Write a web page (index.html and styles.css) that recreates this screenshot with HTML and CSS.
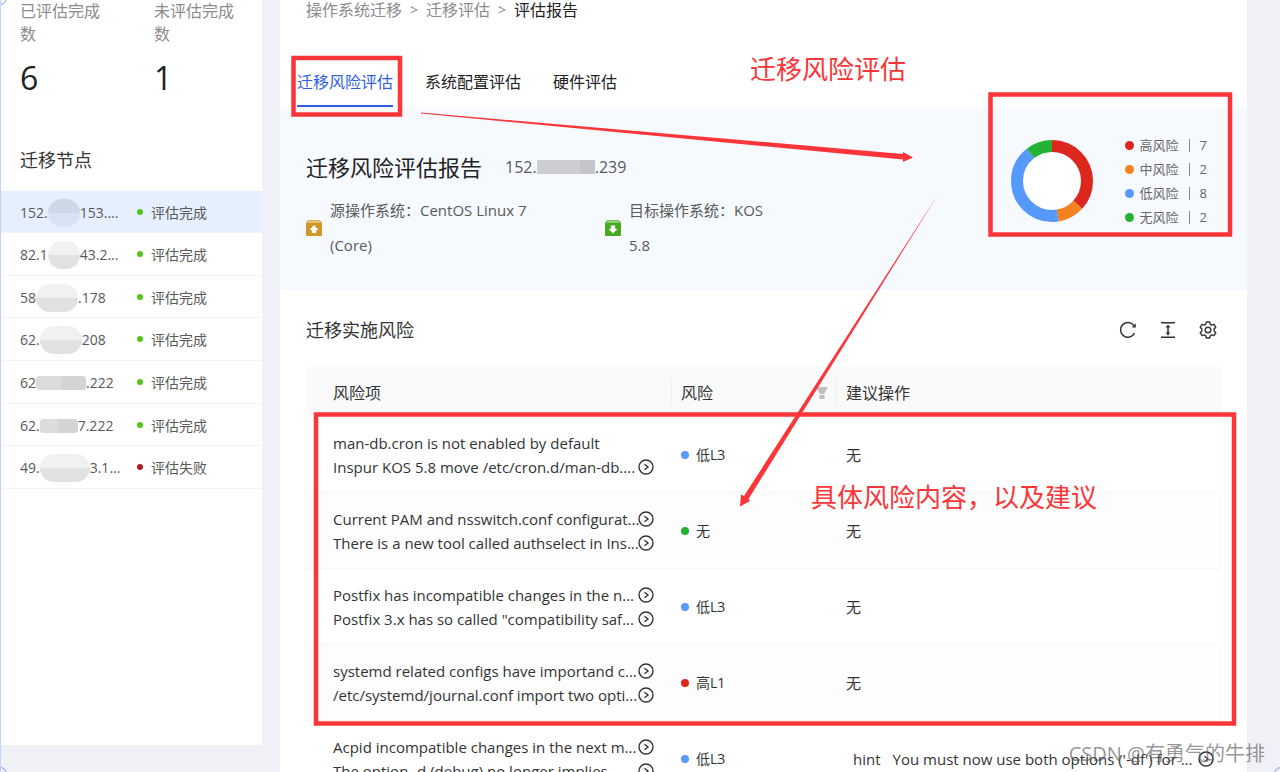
FILE: index.html
```
<!DOCTYPE html>
<html lang="zh-CN">
<head>
    <meta charset="UTF-8">
    <meta name="viewport" content="width=device-width, initial-scale=1.0">
    <title>评估报告 - 操作系统迁移</title>
    <link rel="stylesheet" href="styles.css">
</head>
<body>
    <svg class="sprite" aria-hidden="true">
        <symbol id="icon-more" viewBox="0 0 16 16">
            <circle cx="8" cy="8" r="7" fill="none" stroke="currentColor" stroke-width="1.4"/>
            <path d="M6.5 5.2 L10 8 L6.5 10.8" fill="none" stroke="currentColor" stroke-width="1.4"/>
        </symbol>
    </svg>

    <div class="app">
        <aside class="sidebar">
            <div class="stats">
                <div class="stat">
                    <div class="stat-label">已评估完成数</div>
                    <div class="stat-number">6</div>
                </div>
                <div class="stat">
                    <div class="stat-label">未评估完成数</div>
                    <div class="stat-number">1</div>
                </div>
            </div>
            <h2 class="sidebar-title">迁移节点</h2>
            <table class="nodes">
                <tr class="selected">
                    <td><div class="ip">152.<span class="mosaic blue round"></span>153....</div></td>
                    <td><span class="dot done"></span>评估完成</td>
                </tr>
                <tr>
                    <td><div class="ip">82.1<span class="mosaic round"></span>43.2...</div></td>
                    <td><span class="dot done"></span>评估完成</td>
                </tr>
                <tr>
                    <td><div class="ip">58<span class="mosaic round wide"></span>.178</div></td>
                    <td><span class="dot done"></span>评估完成</td>
                </tr>
                <tr>
                    <td><div class="ip">62.<span class="mosaic round wide"></span>208</div></td>
                    <td><span class="dot done"></span>评估完成</td>
                </tr>
                <tr>
                    <td><div class="ip">62<span class="mosaic flat"></span>.222</div></td>
                    <td><span class="dot done"></span>评估完成</td>
                </tr>
                <tr>
                    <td><div class="ip">62.<span class="mosaic flat short"></span>7.222</div></td>
                    <td><span class="dot done"></span>评估完成</td>
                </tr>
                <tr>
                    <td><div class="ip">49.<span class="mosaic round wider"></span>3.1...</div></td>
                    <td><span class="dot failed"></span>评估失败</td>
                </tr>
            </table>
        </aside>

        <main class="main">
            <nav class="breadcrumb">
                <a href="#">操作系统迁移</a>
                <span class="sep">&gt;</span>
                <a href="#">迁移评估</a>
                <span class="sep">&gt;</span>
                <span class="current">评估报告</span>
            </nav>
            <div class="tabs">
                <button class="tab active">迁移风险评估</button>
                <button class="tab">系统配置评估</button>
                <button class="tab">硬件评估</button>
            </div>

            <section class="report">
                <div class="report-info">
                    <div class="report-heading">
                        <h1>迁移风险评估报告</h1>
                        <div class="ip report-ip">152.<span class="mosaic dark"></span>.239</div>
                    </div>
                    <div class="systems">
                        <div class="system">
                            <svg class="system-icon" viewBox="0 0 16 16">
                                <rect y="3" width="16" height="13" rx="1" fill="#d09628"/>
                                <path d="M2 0.8 H14 L15.5 3 H0.5 Z" fill="#f1dfb4" stroke="#d09628"/>
                                <path d="M8 5 L12.5 10 H10.2 V13 H5.8 V10 H3.5 Z" fill="#fff"/>
                            </svg>
                            <p>源操作系统：CentOS Linux 7 (Core)</p>
                        </div>
                        <div class="system">
                            <svg class="system-icon" viewBox="0 0 16 16">
                                <rect y="3" width="16" height="13" rx="1" fill="#49aa22"/>
                                <path d="M2 0.8 H14 L15.5 3 H0.5 Z" fill="#c4e8b4" stroke="#49aa22"/>
                                <path d="M8 13.2 L12.5 9 H10.2 V5.5 H5.8 V9 H3.5 Z" fill="#fff"/>
                            </svg>
                            <p class="target">目标操作系统：KOS 5.8</p>
                        </div>
                    </div>
                </div>
                <div class="chart">
                    <svg class="donut" viewBox="0 0 82 82">
                        <circle cx="41" cy="41" r="29" fill="#fff"/>
                        <g fill="none" stroke-width="12" transform="rotate(-90 41 41)">
                            <circle cx="41" cy="41" r="35" pathLength="19" stroke="#dc261e" stroke-dasharray="7 12"/>
                            <circle cx="41" cy="41" r="35" pathLength="19" stroke="#f58220" stroke-dasharray="2 17" stroke-dashoffset="-7"/>
                            <circle cx="41" cy="41" r="35" pathLength="19" stroke="#5599fc" stroke-dasharray="8 11" stroke-dashoffset="-9"/>
                            <circle cx="41" cy="41" r="35" pathLength="19" stroke="#22b335" stroke-dasharray="2 17" stroke-dashoffset="-17"/>
                        </g>
                    </svg>
                    <ul class="legend">
                        <li><span class="dot high"></span>高风险<i></i>7</li>
                        <li><span class="dot medium"></span>中风险<i></i>2</li>
                        <li><span class="dot low"></span>低风险<i></i>8</li>
                        <li><span class="dot none"></span>无风险<i></i>2</li>
                    </ul>
                </div>
            </section>

            <section class="risks">
                <div class="risks-header">
                    <h2>迁移实施风险</h2>
                    <div class="tools">
                        <button aria-label="刷新">
                            <svg viewBox="0 0 18 18" fill="none" stroke="currentColor" stroke-width="1.5">
                                <path d="M15.6 12.2 A7.4 7.4 0 1 1 15 4.6"/>
                                <path d="M16.8 2.2 V6.4 H12.8 Z" fill="currentColor" stroke="none"/>
                            </svg>
                        </button>
                        <button aria-label="密度">
                            <svg viewBox="0 0 18 18" fill="none" stroke="currentColor" stroke-width="1.5">
                                <path d="M2 1.8 H16 M2 16.2 H16 M9 5 V13"/>
                                <path d="M9 3.6 L11.4 6.6 H6.6 Z M9 14.4 L11.4 11.4 H6.6 Z" fill="currentColor" stroke="none"/>
                            </svg>
                        </button>
                        <button aria-label="设置">
                            <svg viewBox="0 0 18 18" fill="none" stroke="currentColor" stroke-width="1.4" stroke-linejoin="round">
                                <path d="M7.3 1 H10.7 L11.3 3.3 L12.6 4.1 L15 3.4 L16.8 6.3 L15.1 8 V10 L16.8 11.7 L15 14.6 L12.6 13.9 L11.3 14.7 L10.7 17 H7.3 L6.7 14.7 L5.4 13.9 L3 14.6 L1.2 11.7 L2.9 10 V8 L1.2 6.3 L3 3.4 L5.4 4.1 L6.7 3.3 Z"/>
                                <circle cx="9" cy="9" r="2.8"/>
                            </svg>
                        </button>
                    </div>
                </div>
                <table class="risk-table">
                    <colgroup>
                        <col class="col-item">
                        <col class="col-level">
                        <col>
                    </colgroup>
                    <thead>
                        <tr>
                            <th>风险项</th>
                            <th>
                                <div class="th-filter">
                                    风险
                                    <svg class="filter" viewBox="0 0 12 12"><path d="M0 0 H12 L8.5 6 V7 H3.5 V6 Z M3.5 8 H8.5 V12 H3.5 Z" fill="#bfbfbf"/></svg>
                                </div>
                            </th>
                            <th>建议操作</th>
                        </tr>
                    </thead>
                    <tbody>
                        <tr>
                            <td>
                                <div class="line"><span>man-db.cron is not enabled by default</span></div>
                                <div class="line"><span>Inspur KOS 5.8 move /etc/cron.d/man-db....</span><button class="more" aria-label="详情"><svg><use href="#icon-more"/></svg></button></div>
                            </td>
                            <td class="level"><span class="dot low"></span>低L3</td>
                            <td>无</td>
                        </tr>
                        <tr>
                            <td>
                                <div class="line"><span>Current PAM and nsswitch.conf configurat...</span><button class="more" aria-label="详情"><svg><use href="#icon-more"/></svg></button></div>
                                <div class="line"><span>There is a new tool called authselect in Ins...</span><button class="more" aria-label="详情"><svg><use href="#icon-more"/></svg></button></div>
                            </td>
                            <td class="level"><span class="dot none"></span>无</td>
                            <td>无</td>
                        </tr>
                        <tr>
                            <td>
                                <div class="line"><span>Postfix has incompatible changes in the n...</span><button class="more" aria-label="详情"><svg><use href="#icon-more"/></svg></button></div>
                                <div class="line"><span>Postfix 3.x has so called "compatibility saf...</span><button class="more" aria-label="详情"><svg><use href="#icon-more"/></svg></button></div>
                            </td>
                            <td class="level"><span class="dot low"></span>低L3</td>
                            <td>无</td>
                        </tr>
                        <tr>
                            <td>
                                <div class="line"><span>systemd related configs have importand c...</span><button class="more" aria-label="详情"><svg><use href="#icon-more"/></svg></button></div>
                                <div class="line"><span>/etc/systemd/journal.conf import two opti...</span><button class="more" aria-label="详情"><svg><use href="#icon-more"/></svg></button></div>
                            </td>
                            <td class="level"><span class="dot high"></span>高L1</td>
                            <td>无</td>
                        </tr>
                        <tr>
                            <td>
                                <div class="line"><span>Acpid incompatible changes in the next m...</span><button class="more" aria-label="详情"><svg><use href="#icon-more"/></svg></button></div>
                                <div class="line"><span>The option -d (debug) no longer implies -...</span><button class="more" aria-label="详情"><svg><use href="#icon-more"/></svg></button></div>
                            </td>
                            <td class="level"><span class="dot low"></span>低L3</td>
                            <td>
                                <div class="hint"><b>hint</b><span>You must now use both options ('-df') for ...</span><button class="more" aria-label="详情"><svg><use href="#icon-more"/></svg></button></div>
                            </td>
                        </tr>
                    </tbody>
                </table>
            </section>
        </main>

        <!-- 标注层 -->
        <svg class="marks" width="1280" height="772" viewBox="0 0 1280 772">
            <g fill="none" stroke="#fb3538" stroke-width="4.5">
                <rect x="293.5" y="58" width="106.5" height="56.5"/>
                <rect x="990.5" y="94.5" width="239.5" height="140"/>
                <rect x="316" y="414.5" width="918" height="309"/>
            </g>
            <g fill="#fb3538">
                <path d="M421 112.5 L903 154 L903 152 L913 157.5 L903 162 L903 159.5 L421 113.5 Z"/>
                <path d="M939 193 L748.5 499 L750 501 L740 506.5 L741 494.5 L744 496 Z"/>
            </g>
            <g fill="none" stroke="#7b97ee">
                <circle cx="0" cy="-2" r="6.5"/>
                <circle cx="0" cy="774" r="6.5"/>
                <circle cx="1281" cy="774" r="6.5"/>
            </g>
        </svg>
        <div class="note note-top">迁移风险评估</div>
        <div class="note note-detail">具体风险内容，以及建议</div>
        <div class="watermark">CSDN @有勇气的牛排</div>
    </div>
</body>
</html>
```
FILE: styles.css
```
* {
    box-sizing: border-box;
}

body {
    margin: 0;
    font-family: "Open Sans", "Noto Sans CJK SC", sans-serif;
    font-size: 15px;
    line-height: 24px;
    color: #333;
    background: #eff1f6;
}

h1, h2, p, ul {
    margin: 0;
    padding: 0;
    font-weight: 400;
}

button {
    font: inherit;
    color: inherit;
    border: 0;
    padding: 0;
    background: none;
    cursor: pointer;
}

a {
    color: inherit;
    text-decoration: none;
}

.sprite {
    display: none;
}

.app {
    position: relative;
    display: flex;
    align-items: flex-start;
    gap: 18px;
    height: 100vh;
    padding-right: 33px;
    overflow: hidden;
    border-left: 1px solid #c6d2fb;
}

/* 左侧栏 */
.sidebar {
    flex: 0 0 261px;
    padding-bottom: 256px;
    background: #fff;
}

.stats {
    display: grid;
    grid-template-columns: 134px 1fr;
    padding-left: 19px;
}

.stat-label {
    width: 88px;
    font-size: 16px;
    line-height: 23px;
    color: #8c8c8c;
}

.stat-number {
    font-size: 32px;
    line-height: 63px;
    color: #222;
}

.sidebar-title {
    padding: 39px 19px 19px;
    font-size: 18px;
}

.nodes {
    width: 100%;
    height: 298px;
    border-collapse: collapse;
    font-size: 14px;
    line-height: 20px;
    color: #595959;
}

.nodes td {
    padding: 2px 0 0;
    border-bottom: 1px solid #f3f3f5;
}

.nodes td:first-child {
    width: 136px;
    padding-left: 19px;
}

.nodes .selected {
    background: #e6effe;
}

.ip {
    display: flex;
    align-items: center;
    height: 20px;
    white-space: nowrap;
}

.mosaic {
    flex: none;
    width: 32px;
    height: 14px;
    background: linear-gradient(90deg, #dcdcdd 50%, #d4d4d5 50%);
}

.mosaic.round {
    height: 28px;
    border-radius: 14px;
    background: linear-gradient(#f1f1f1 50%, #e0e1e2 50%);
}

.mosaic.blue.round {
    background: linear-gradient(#ced7e6 50%, #d8e2f2 50%);
}

.mosaic.wide {
    width: 42px;
}

.mosaic.wider {
    width: 50px;
}

.mosaic.flat {
    width: 50px;
    border-radius: 3px;
}

.mosaic.flat.short {
    width: 38px;
}

.mosaic.dark {
    width: 58px;
    background: linear-gradient(90deg, #ccced2 75%, #c4c5ca 75%);
}

.dot {
    display: inline-block;
    width: 8px;
    height: 8px;
    margin-right: 7px;
    border-radius: 50%;
    vertical-align: 1px;
}

.nodes .dot {
    width: 6px;
    height: 6px;
    margin-right: 8px;
    vertical-align: 3px;
}

.done { background: #52c41a; }
.failed { background: #a61d24; }
.high { background: #dc261e; }
.medium { background: #f58220; }
.low { background: #5599fc; }
.none { background: #22b335; }

/* 主内容 */
.main {
    flex: 1;
    min-width: 0;
    background: #fff;
}

.breadcrumb {
    display: flex;
    gap: 8px;
    padding-left: 26px;
    font-size: 16px;
    line-height: 20px;
    color: #8c8c8c;
}

.sep {
    font-size: 14px;
}

.current {
    color: #222;
}

.tabs {
    display: flex;
    gap: 32px;
    padding: 39px 17px 0;
}

.tab {
    height: 48px;
    border-bottom: 2px solid transparent;
    font-size: 16px;
    color: #222;
}

.tab.active {
    color: #2f5fe0;
    border-bottom-color: #2f5fe0;
}

.report {
    display: flex;
    justify-content: space-between;
    padding: 33px 40px 27px 26px;
    background: #f6faff;
}

.report-heading {
    display: flex;
    align-items: center;
    gap: 23px;
    height: 54px;
}

h1 {
    font-size: 22px;
    color: #222;
}

.report-ip {
    font-size: 16px;
    color: #595959;
}

.systems {
    display: flex;
    margin-top: -1px;
    color: #595959;
}

.system {
    display: flex;
    align-items: center;
    gap: 8px;
    width: 299px;
    line-height: 35px;
}

.system p {
    width: 225px;
}

.system p.target {
    width: 150px;
}

.system-icon {
    flex: none;
    width: 16px;
    height: 16px;
}

.chart {
    display: flex;
    align-items: center;
    gap: 32px;
    height: 82px;
}

.donut {
    width: 82px;
    height: 82px;
}

.legend {
    font-size: 13px;
    color: #666;
    list-style: none;
}

.legend li {
    display: flex;
    align-items: center;
}

.legend .dot {
    width: 9px;
    height: 9px;
    margin-right: 6px;
}

.legend i {
    width: 1px;
    height: 13px;
    margin: 0 10px;
    background: #888;
}

.risks {
    padding: 26px 26px 0;
}

.risks-header {
    display: flex;
    justify-content: space-between;
    align-items: center;
    height: 28px;
    margin-bottom: 23px;
    padding-right: 4px;
}

.risks-header h2 {
    font-size: 18px;
}

.tools {
    display: flex;
    gap: 22px;
}

.tools button, .tools svg {
    display: block;
    width: 18px;
    height: 18px;
}

.risk-table {
    width: 100%;
    table-layout: fixed;
    border-collapse: separate;
    border-spacing: 0;
}

.col-item {
    width: 366px;
}

.col-level {
    width: 165px;
}

.risk-table th {
    height: 50px;
    padding: 1px 9px 0;
    background: linear-gradient(#eee, #eee) right center / 1px 26px no-repeat #fafafa;
    font-size: 16px;
    font-weight: 400;
    text-align: left;
}

.risk-table th:last-child {
    background: #fafafa;
}

.risk-table td {
    height: 76px;
    padding: 0 9px;
    border-bottom: 1px solid #f5f5f5;
}

.risk-table th:first-child, .risk-table td:first-child {
    padding-left: 27px;
    padding-right: 0;
}

.risk-table tr:nth-child(even) td {
    background: #fdfdfd;
}

.th-filter {
    display: flex;
    justify-content: space-between;
    align-items: center;
}

.filter {
    width: 12px;
    height: 12px;
}

.line, .hint {
    display: flex;
    align-items: center;
    white-space: nowrap;
}

.line span {
    flex: 0 0 304px;
    min-width: 0;
}

.level {
    font-size: 14px;
}

.more, .more svg {
    display: block;
    width: 16px;
    height: 16px;
}

.line .more {
    margin-left: 1px;
}

.hint {
    padding-left: 7px;
}

.hint b {
    margin-right: 12px;
    font-weight: 400;
}

.hint .more {
    margin-left: 6px;
}

/* 标注 */
.marks {
    position: absolute;
    top: 0;
    left: -1px;
    pointer-events: none;
}

.note {
    position: absolute;
    font-size: 26px;
    line-height: 36px;
    color: #fb3538;
}

.note-top {
    left: 749px;
    top: 51px;
}

.note-detail {
    left: 810px;
    top: 479px;
}

.watermark {
    position: absolute;
    right: 15px;
    bottom: 6px;
    font-size: 20px;
    color: rgba(90, 90, 90, 0.65);
}
```
